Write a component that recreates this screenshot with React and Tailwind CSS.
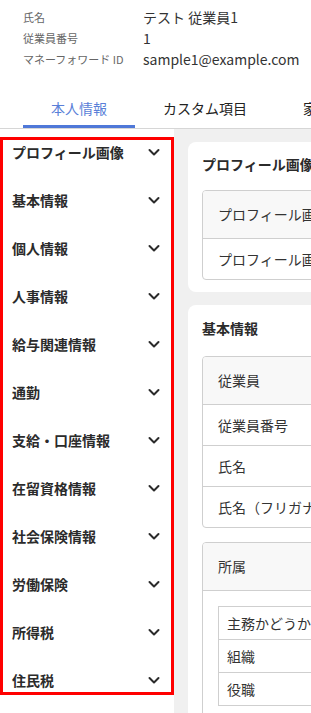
import React from "react";

const font = { fontFamily: '"Noto Sans CJK JP", "Noto Sans", sans-serif' };

const sideItems = [
  "プロフィール画像",
  "基本情報",
  "個人情報",
  "人事情報",
  "給与関連情報",
  "通勤",
  "支給・口座情報",
  "在留資格情報",
  "社会保険情報",
  "労働保険",
  "所得税",
  "住民税",
];

function Chevron() {
  return (
    <svg width="14" height="14" viewBox="0 0 14 14" fill="none">
      <polyline
        points="2.5,5 7,9.5 11.5,5"
        stroke="#2b2b2b"
        strokeWidth="2"
        strokeLinecap="round"
        strokeLinejoin="round"
      />
    </svg>
  );
}

export default function App() {
  return (
    <div className="w-[311px] h-[713px] overflow-hidden bg-white text-[#333]" style={font}>
      <div className="w-[900px]">
        {/* Header */}
        <div className="pl-[23px] pt-[7px]">
          <div className="flex h-[21px] items-center">
            <div className="w-[120px] text-[11px] text-[#666]">氏名</div>
            <div className="text-[14px] text-[#333]">テスト 従業員1</div>
          </div>
          <div className="flex h-[21px] items-center">
            <div className="w-[120px] text-[11px] text-[#666]">従業員番号</div>
            <div className="text-[14px] text-[#333]">1</div>
          </div>
          <div className="flex h-[21px] items-center">
            <div className="w-[120px] text-[11px] text-[#666]">マネーフォワード ID</div>
            <div className="text-[14px] text-[#333]">sample1@example.com</div>
          </div>
        </div>
        {/* Tabs */}
        <div className="mt-[23px] flex border-b border-[#d6d6d6] pl-[23px]">
          <div className="flex h-[35px] items-center border-b-[3px] border-[#4f78d8] px-[28px] pb-[1px] text-[14px] text-[#5a7fd8]">
            本人情報
          </div>
          <div className="flex h-[35px] items-center border-b-[3px] border-transparent px-[28px] pb-[1px] text-[14px] text-[#222]">
            カスタム項目
          </div>
          <div className="flex h-[35px] items-center border-b-[3px] border-transparent px-[28px] pb-[1px] text-[14px] text-[#222]">
            家族情報
          </div>
        </div>
        {/* Body */}
        <div className="flex h-[600px] bg-[#f0f0f0]">
          <div className="w-[174px] shrink-0 bg-white pt-[8px]">
            <div className="flex flex-col gap-[26px] border-[3px] border-[#ff0000] pl-[9px] pr-[10px] pt-[1px] pb-[1px]">
              {sideItems.map((t) => (
                <div key={t} className="flex h-[22px] items-center justify-between">
                  <span className="text-[14px] font-bold text-[#2b2b2b]">{t}</span>
                  <Chevron />
                </div>
              ))}
            </div>
          </div>
          <div className="flex w-[600px] flex-col gap-[13px] pl-[14px] pt-[13px]">
            {/* Card 1 */}
            <div className="rounded-lg bg-white px-[14px] pb-[12px] pt-[11px]">
              <div className="mb-[15px] h-[22px] text-[14px] font-bold leading-[22px] text-[#2b2b2b]">
                プロフィール画像
              </div>
              <div className="overflow-hidden rounded-[4px] border border-[#cfcfcf]">
                <div className="flex h-[48px] items-center border-b border-[#cfcfcf] bg-[#f8f8f8] pl-[15px] text-[14px]">
                  プロフィール画像
                </div>
                <div className="flex h-[40px] items-center pl-[15px] text-[14px]">
                  プロフィール画像
                </div>
              </div>
            </div>
            {/* Card 2 */}
            <div className="rounded-lg bg-white px-[14px] pb-[12px] pt-[12px]">
              <div className="mb-[17px] h-[22px] text-[14px] font-bold leading-[22px] text-[#2b2b2b]">
                基本情報
              </div>
              <div className="overflow-hidden rounded-[4px] border border-[#cfcfcf]">
                <div className="flex h-[48px] items-center border-b border-[#cfcfcf] bg-[#f8f8f8] pl-[15px] text-[14px]">
                  従業員
                </div>
                <div className="flex h-[41px] items-center border-b border-[#cfcfcf] pl-[15px] text-[14px]">
                  従業員番号
                </div>
                <div className="flex h-[41px] items-center border-b border-[#cfcfcf] pl-[15px] text-[14px]">
                  氏名
                </div>
                <div className="flex h-[40px] items-center pl-[15px] text-[14px]">
                  氏名（フリガナ）
                </div>
              </div>
              <div className="mt-[14px] overflow-hidden rounded-[4px] border border-[#cfcfcf]">
                <div className="flex h-[48px] items-center border-b border-[#cfcfcf] bg-[#f8f8f8] pl-[15px] text-[14px]">
                  所属
                </div>
                <div className="px-[15px] py-[15px]">
                  <div className="border border-[#cfcfcf]">
                    <div className="flex h-[33px] items-center border-b border-[#cfcfcf] pl-[8px] text-[14px]">
                      主務かどうか
                    </div>
                    <div className="flex h-[33px] items-center border-b border-[#cfcfcf] pl-[8px] text-[14px]">
                      組織
                    </div>
                    <div className="flex h-[32px] items-center pl-[8px] text-[14px]">
                      役職
                    </div>
                  </div>
                </div>
              </div>
            </div>
          </div>
        </div>
      </div>
    </div>
  );
}
